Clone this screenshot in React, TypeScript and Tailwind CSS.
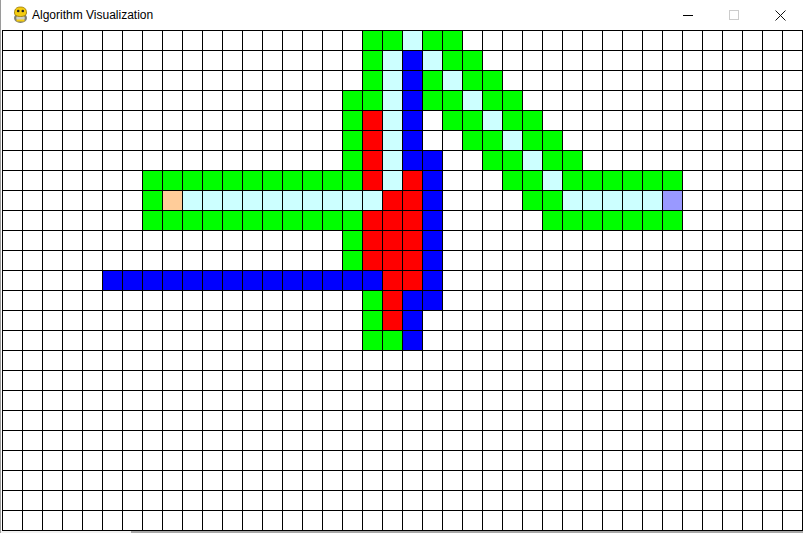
const COLS = 40;
const ROWS = 25;

// cell types: g open, c visited path, b wall, r closed, s start, e end
type Cell = "." | "g" | "c" | "b" | "r" | "s" | "e";

const runs: [number, number, number, Cell][] = [
  // [row, fromCol, toCol, type]
  [0, 18, 19, "g"], [0, 20, 20, "c"], [0, 21, 22, "g"],
  [1, 18, 18, "g"], [1, 19, 19, "c"], [1, 20, 20, "b"], [1, 21, 21, "c"], [1, 22, 23, "g"],
  [2, 18, 18, "g"], [2, 19, 19, "c"], [2, 20, 20, "b"], [2, 21, 21, "g"], [2, 22, 22, "c"], [2, 23, 24, "g"],
  [3, 17, 18, "g"], [3, 19, 19, "c"], [3, 20, 20, "b"], [3, 21, 22, "g"], [3, 23, 23, "c"], [3, 24, 25, "g"],
  [4, 17, 17, "g"], [4, 18, 18, "r"], [4, 19, 19, "c"], [4, 20, 20, "b"], [4, 22, 23, "g"], [4, 24, 24, "c"], [4, 25, 26, "g"],
  [5, 17, 17, "g"], [5, 18, 18, "r"], [5, 19, 19, "c"], [5, 20, 20, "b"], [5, 23, 24, "g"], [5, 25, 25, "c"], [5, 26, 27, "g"],
  [6, 17, 17, "g"], [6, 18, 18, "r"], [6, 19, 19, "c"], [6, 20, 21, "b"], [6, 24, 25, "g"], [6, 26, 26, "c"], [6, 27, 28, "g"],
  [7, 7, 17, "g"], [7, 18, 18, "r"], [7, 19, 19, "c"], [7, 20, 20, "r"], [7, 21, 21, "b"], [7, 25, 26, "g"], [7, 27, 27, "c"], [7, 28, 33, "g"],
  [8, 7, 7, "g"], [8, 8, 8, "s"], [8, 9, 18, "c"], [8, 19, 20, "r"], [8, 21, 21, "b"], [8, 26, 27, "g"], [8, 28, 32, "c"], [8, 33, 33, "e"],
  [9, 7, 17, "g"], [9, 18, 20, "r"], [9, 21, 21, "b"], [9, 27, 33, "g"],
  [10, 17, 17, "g"], [10, 18, 20, "r"], [10, 21, 21, "b"],
  [11, 17, 17, "g"], [11, 18, 20, "r"], [11, 21, 21, "b"],
  [12, 5, 18, "b"], [12, 19, 20, "r"], [12, 21, 21, "b"],
  [13, 18, 18, "g"], [13, 19, 19, "r"], [13, 20, 21, "b"],
  [14, 18, 18, "g"], [14, 19, 19, "r"], [14, 20, 20, "b"],
  [15, 18, 19, "g"], [15, 20, 20, "b"],
];

const grid: Cell[][] = Array.from({ length: ROWS }, () => Array<Cell>(COLS).fill("."));
runs.forEach(([r, a, b, t]) => {
  for (let c = a; c <= b; c++) grid[r][c] = t;
});

const CELL_CLASS: Record<Cell, string> = {
  ".": "bg-white",
  g: "bg-[#00ff00]",
  c: "bg-[#ccffff]",
  b: "bg-[#0000ff]",
  r: "bg-[#ff0000]",
  s: "bg-[#ffcc99]",
  e: "bg-[#9999ff]",
};

function PygameIcon() {
  return (
    <svg width="17" height="18" viewBox="0 0 17 18">
      <ellipse cx="8.5" cy="12" rx="6.5" ry="5" fill="#7d7d70" />
      <ellipse cx="8.5" cy="12" rx="4.3" ry="3" fill="#d2d2c2" />
      <path d="M2.5 7 C2.5 2 5.5 1 8.5 1 C11.5 1 14.5 2 14.5 7 C14.5 9.5 12 10.5 8.5 10.5 C5 10.5 2.5 9.5 2.5 7 Z" fill="#f5cc0f" stroke="#8f7000" strokeWidth="0.8" />
      <circle cx="6.2" cy="5" r="1.3" fill="#222" />
      <circle cx="10.8" cy="5" r="1.3" fill="#222" />
      <path d="M4.5 14.5 L12.5 14.5" stroke="#f5cc0f" strokeWidth="2" />
    </svg>
  );
}

function TitleBar() {
  return (
    <div className="flex h-[30px] items-center bg-white pl-[11px] font-['Liberation_Sans',Arial,sans-serif] text-[12px] text-black">
      <PygameIcon />
      <span className="ml-[3px]">Algorithm Visualization</span>
      <div className="ml-auto flex h-full items-center">
        <div className="flex h-full w-[46px] items-center justify-center">
          <div className="h-px w-[10px] bg-black" />
        </div>
        <div className="flex h-full w-[46px] items-center justify-center">
          <div className="h-[10px] w-[10px] border border-[#cccccc]" />
        </div>
        <div className="flex h-full w-[46px] items-center justify-center">
          <svg width="11" height="11" viewBox="0 0 11 11">
            <path d="M0.5 0.5 L10.5 10.5 M10.5 0.5 L0.5 10.5" stroke="#111" strokeWidth="1" />
          </svg>
        </div>
      </div>
    </div>
  );
}

export default function App() {
  return (
    <div className="h-[533px] w-[803px] overflow-hidden border-l border-[#9a9a9a] bg-white">
      <TitleBar />
      <div className="pl-px">
        <div className="grid w-fit grid-cols-[repeat(40,19px)] gap-px border border-black bg-black">
          {grid.flatMap((row, r) =>
            row.map((cell, c) => <div key={`${r}-${c}`} className={`h-[19px] ${CELL_CLASS[cell]}`} />)
          )}
        </div>
      </div>
      <div className="flex h-[3px] overflow-hidden bg-[#a8a8a8]">
        <div className="w-[130px] bg-[#f0f0f0] pt-[1px] font-['Liberation_Sans',Arial,sans-serif] text-[16px] leading-none text-[#333]">
          Entries 14/47
        </div>
      </div>
    </div>
  );
}
